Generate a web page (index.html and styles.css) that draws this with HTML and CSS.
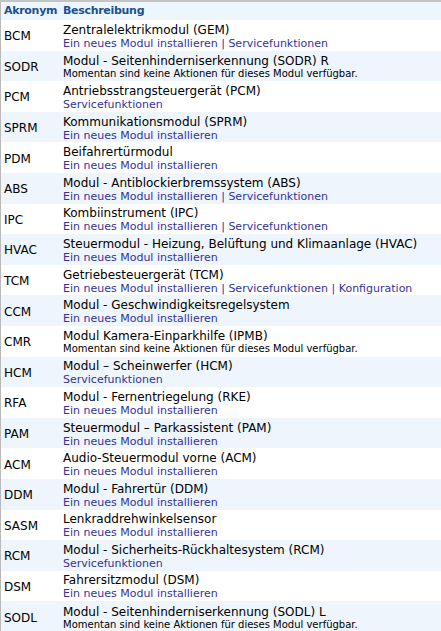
FILE: index.html
```html
<!DOCTYPE html>
<html lang="de">
<head>
<meta charset="utf-8">
<title>Module</title>
<link rel="stylesheet" href="styles.css">
</head>
<body>
<table class="modules">
  <thead>
    <tr><th class="acr">Akronym</th><th class="desc">Beschreibung</th></tr>
  </thead>
  <tbody>
    <tr><td class="acr">BCM</td><td class="desc"><div class="name">Zentralelektrikmodul (GEM)</div><div class="links"><a>Ein neues Modul installieren</a> | <a>Servicefunktionen</a></div></td></tr>
    <tr class="alt"><td class="acr">SODR</td><td class="desc"><div class="name">Modul - Seitenhinderniserkennung (SODR) R</div><div class="note">Momentan sind keine Aktionen für dieses Modul verfügbar.</div></td></tr>
    <tr><td class="acr">PCM</td><td class="desc"><div class="name">Antriebsstrangsteuergerät (PCM)</div><div class="links"><a>Servicefunktionen</a></div></td></tr>
    <tr class="alt"><td class="acr">SPRM</td><td class="desc"><div class="name">Kommunikationsmodul (SPRM)</div><div class="links"><a>Ein neues Modul installieren</a></div></td></tr>
    <tr><td class="acr">PDM</td><td class="desc"><div class="name">Beifahrertürmodul</div><div class="links"><a>Ein neues Modul installieren</a></div></td></tr>
    <tr class="alt"><td class="acr">ABS</td><td class="desc"><div class="name">Modul - Antiblockierbremssystem (ABS)</div><div class="links"><a>Ein neues Modul installieren</a> | <a>Servicefunktionen</a></div></td></tr>
    <tr><td class="acr">IPC</td><td class="desc"><div class="name">Kombiinstrument (IPC)</div><div class="links"><a>Ein neues Modul installieren</a> | <a>Servicefunktionen</a></div></td></tr>
    <tr class="alt"><td class="acr">HVAC</td><td class="desc"><div class="name">Steuermodul - Heizung, Belüftung und Klimaanlage (HVAC)</div><div class="links"><a>Ein neues Modul installieren</a></div></td></tr>
    <tr><td class="acr">TCM</td><td class="desc"><div class="name">Getriebesteuergerät (TCM)</div><div class="links"><a>Ein neues Modul installieren</a> | <a>Servicefunktionen</a> | <a>Konfiguration</a></div></td></tr>
    <tr class="alt"><td class="acr">CCM</td><td class="desc"><div class="name">Modul - Geschwindigkeitsregelsystem</div><div class="links"><a>Ein neues Modul installieren</a></div></td></tr>
    <tr><td class="acr">CMR</td><td class="desc"><div class="name">Modul Kamera-Einparkhilfe (IPMB)</div><div class="note">Momentan sind keine Aktionen für dieses Modul verfügbar.</div></td></tr>
    <tr class="alt"><td class="acr">HCM</td><td class="desc"><div class="name">Modul – Scheinwerfer (HCM)</div><div class="links"><a>Servicefunktionen</a></div></td></tr>
    <tr><td class="acr">RFA</td><td class="desc"><div class="name">Modul - Fernentriegelung (RKE)</div><div class="links"><a>Ein neues Modul installieren</a></div></td></tr>
    <tr class="alt"><td class="acr">PAM</td><td class="desc"><div class="name">Steuermodul – Parkassistent (PAM)</div><div class="links"><a>Ein neues Modul installieren</a></div></td></tr>
    <tr><td class="acr">ACM</td><td class="desc"><div class="name">Audio-Steuermodul vorne (ACM)</div><div class="links"><a>Ein neues Modul installieren</a></div></td></tr>
    <tr class="alt"><td class="acr">DDM</td><td class="desc"><div class="name">Modul - Fahrertür (DDM)</div><div class="links"><a>Ein neues Modul installieren</a></div></td></tr>
    <tr><td class="acr">SASM</td><td class="desc"><div class="name">Lenkraddrehwinkelsensor</div><div class="links"><a>Ein neues Modul installieren</a></div></td></tr>
    <tr class="alt"><td class="acr">RCM</td><td class="desc"><div class="name">Modul - Sicherheits-Rückhaltesystem (RCM)</div><div class="links"><a>Servicefunktionen</a></div></td></tr>
    <tr><td class="acr">DSM</td><td class="desc"><div class="name">Fahrersitzmodul (DSM)</div><div class="links"><a>Ein neues Modul installieren</a></div></td></tr>
    <tr class="alt"><td class="acr">SODL</td><td class="desc"><div class="name">Modul - Seitenhinderniserkennung (SODL) L</div><div class="note">Momentan sind keine Aktionen für dieses Modul verfügbar.</div></td></tr>
  </tbody>
</table>
</body>
</html>
```
FILE: styles.css
```css
html, body {
  margin: 0;
  padding: 0;
  background: #ffffff;
}
body {
  font-family: "DejaVu Sans", Verdana, sans-serif;
  color: #000000;
}
.modules {
  width: 100%;
  border-collapse: collapse;
  border-top: 2px solid #c4c4c4;
  border-left: 1px solid #b9b9b9;
}
.modules th {
  background: #eef6fd;
  color: #1d4f8f;
  font-size: 11px;
  font-weight: bold;
  letter-spacing: -0.3px;
  text-align: left;
  height: 18px;
  padding: 0 0 0 3px;
  line-height: 18px;
}
.modules th.desc {
  padding-left: 0;
}
.modules tbody tr {
  height: 30.6px;
}
.modules td {
  padding: 2px 0 0 0;
  vertical-align: middle;
}
.modules td.acr {
  width: 59px;
  padding-left: 3px;
  font-size: 12px;
}
.modules tr.alt td {
  background: #eef5fc;
}
.name {
  font-size: 12px;
  line-height: 14px;
}
.links {
  font-size: 11px;
  line-height: 13px;
  color: #333399;
}
.links a {
  color: #333399;
}
.note {
  font-size: 10px;
  line-height: 12px;
}
```
